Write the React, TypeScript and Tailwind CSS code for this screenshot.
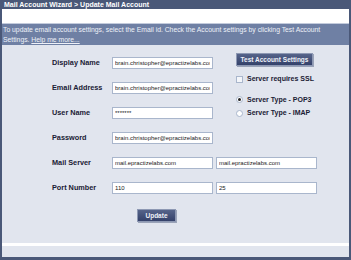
import { FC } from "react";

const Field: FC<{ value: string }> = ({ value }) => (
  <input
    readOnly
    value={value}
    className="h-[12px] w-[101px] border border-[#a9b6cc] bg-white px-[2px] text-[6px] leading-[10px] text-[#1a1a1a] outline-none"
    style={{ fontFamily: "'Liberation Sans', sans-serif" }}
  />
);

const Label: FC<{ text: string }> = ({ text }) => (
  <span className="w-[60px] shrink-0 text-[7.3px] font-bold leading-[12px] text-[#1a2034]">
    {text}
  </span>
);

const NavyButton: FC<{ text: string; className?: string }> = ({ text, className }) => (
  <button
    className={`whitespace-nowrap border border-[#8d98b3] bg-gradient-to-b from-[#56648a] to-[#34416a] text-[6.5px] font-bold text-[#eef1f8] shadow-[1px_1px_0_#9aa3b8] ${className ?? ""}`}
  >
    {text}
  </button>
);

export default function App() {
  return (
    <div
      className="flex h-[260px] w-[351px] flex-col bg-[#4a5878] px-[2px] pb-[3px]"
      style={{ fontFamily: "'Liberation Sans', sans-serif" }}
    >
      <div className="h-[9px] pl-[2px] text-[7px] font-bold leading-[9px] text-white">
        Mail Account Wizard &gt; Update Mail Account
      </div>
      <div className="flex flex-1 flex-col bg-[#e1e5ee]">
        <div className="h-[14px] bg-white" />
        <div className="h-[1px] bg-[#c3cbdc]" />
        <div className="h-[21px] bg-[#6f80a4] px-[1px] pt-[1px] text-[6.8px] leading-[10px] text-[#eef1f8]">
          <div className="whitespace-nowrap">
            To update email account settings, select the Email id. Check the Account settings by clicking Test Account
          </div>
          <div>
            Settings. <span className="underline">Help me more...</span>
          </div>
        </div>

        <div className="flex flex-1 flex-col pl-[50px] pt-[8px]">
          <div className="flex">
            <div className="mt-[4px] flex flex-col gap-[13px]">
              <div className="flex items-center">
                <Label text="Display Name" />
                <Field value="brain.christopher@epractizelabs.com" />
              </div>
              <div className="flex items-center">
                <Label text="Email Address" />
                <Field value="brain.christopher@epractizelabs.com" />
              </div>
              <div className="flex items-center">
                <Label text="User Name" />
                <Field value="*******" />
              </div>
              <div className="flex items-center">
                <Label text="Password" />
                <Field value="brain.christopher@epractizelabs.com" />
              </div>
            </div>
            <div className="ml-[23px] flex flex-col">
              <NavyButton text="Test Account Settings" className="h-[13px] w-[77px]" />
              <label className="mt-[8px] flex items-center gap-[4px] text-[7px] font-bold text-[#1a2034]">
                <span className="h-[7px] w-[7px] border border-[#a9b6cc] bg-[#f4f6fa]" />
                Server requires SSL
              </label>
              <label className="mt-[10px] flex items-center gap-[4px] text-[7px] font-bold text-[#1a2034]">
                <span className="flex h-[7px] w-[7px] items-center justify-center rounded-full border border-[#a9b6cc] bg-white">
                  <span className="h-[3px] w-[3px] rounded-full bg-[#222]" />
                </span>
                Server Type - POP3
              </label>
              <label className="mt-[3px] flex items-center gap-[4px] text-[7px] font-bold text-[#1a2034]">
                <span className="h-[7px] w-[7px] rounded-full border border-[#a9b6cc] bg-white" />
                Server Type - IMAP
              </label>
            </div>
          </div>

          <div className="mt-[13px] flex flex-col gap-[13px]">
            <div className="flex items-center">
              <Label text="Mail Server" />
              <div className="flex gap-[3px]">
                <Field value="mail.epractizelabs.com" />
                <Field value="mail.epractizelabs.com" />
              </div>
            </div>
            <div className="flex items-center">
              <Label text="Port Number" />
              <div className="flex gap-[3px]">
                <Field value="110" />
                <Field value="25" />
              </div>
            </div>
          </div>

          <NavyButton text="Update" className="ml-[85px] mt-[15px] h-[13px] w-[39px]" />
        </div>

        <div className="h-[3px] bg-white" />
        <div className="h-[11px]" />
      </div>
    </div>
  );
}
